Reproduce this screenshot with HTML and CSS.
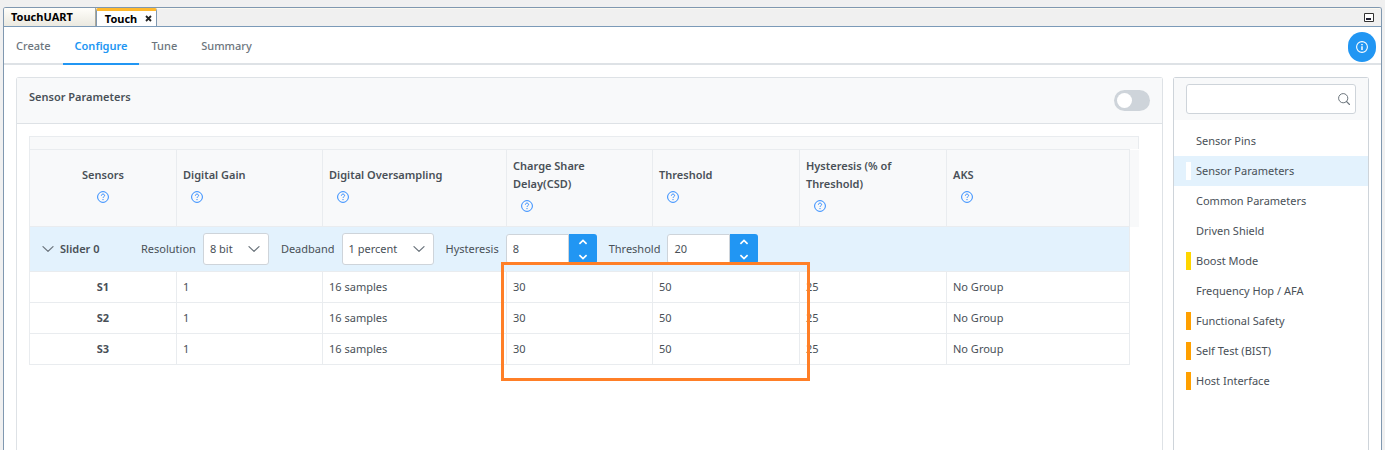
FILE: index.html
```html
<!DOCTYPE html>
<html lang="en">
<head>
<meta charset="utf-8">
<title>Touch</title>
<link rel="stylesheet" href="styles.css">
</head>
<body>
<svg class="sprite" aria-hidden="true">
  <symbol id="help" viewBox="0 0 12 12"><circle cx="6" cy="6" r="5.4" fill="none" stroke="currentColor" stroke-width="1"/><path d="M4.4 4.7C4.4 3.7 5.1 3.1 6 3.1s1.6.6 1.6 1.5c0 1.1-1.6 1.2-1.6 2.3" fill="none" stroke="currentColor" stroke-width="1"/><circle cx="6" cy="8.6" r=".7" fill="currentColor"/></symbol>
  <symbol id="down" viewBox="0 0 12 12"><path d="M1 3.6l5 4.8 5-4.8" fill="none" stroke="currentColor" stroke-width="1.3" stroke-linecap="round" stroke-linejoin="round"/></symbol>
  <symbol id="spin-up" viewBox="0 0 10 6"><path d="M1.4 4.8L5 1.4l3.6 3.4" fill="none" stroke="currentColor" stroke-width="1.7"/></symbol>
  <symbol id="spin-down" viewBox="0 0 10 6"><path d="M1.4 1.2L5 4.6l3.6-3.4" fill="none" stroke="currentColor" stroke-width="1.7"/></symbol>
</svg>
<div class="window">
  <header class="editor-tabs">
    <button class="editor-tab" type="button">TouchUART</button>
    <button class="editor-tab editor-tab-active" type="button">Touch
      <svg class="close" viewBox="0 0 7 7"><path d="M1 1l5 5M6 1L1 6" stroke="#222" stroke-width="1.8"/></svg>
    </button>
    <button class="minimize" type="button" aria-label="Minimize">
      <svg viewBox="0 0 10 9"><path d="M.5.5h9v8h-9z" fill="#fff" stroke="#333" stroke-width="1"/><path d="M2 5h5v2H2z" fill="#223"/></svg>
    </button>
  </header>
  <nav class="steps">
    <a class="step" href="#create">Create</a>
    <a class="step step-active" href="#configure">Configure</a>
    <a class="step" href="#tune">Tune</a>
    <a class="step" href="#summary">Summary</a>
    <button class="info" type="button" aria-label="Information">
      <svg viewBox="0 0 12 12"><circle cx="6" cy="6" r="5.4" fill="none" stroke="#fff" stroke-width="1.1"/><path d="M6 5.2V9M6 2.9v1.3" stroke="#fff" stroke-width="1.5"/></svg>
    </button>
  </nav>
  <main class="content">
    <section class="panel">
      <div class="panel-head">
        <h1 class="panel-title" id="title">Sensor Parameters</h1>
        <input class="switch" type="checkbox" role="switch" aria-labelledby="title">
      </div>
      <div class="panel-body">
        <div class="table-strip"></div>
        <table class="params">
          <colgroup><col class="c-first"><col class="c-mid"><col class="c-wide"><col class="c-mid"><col><col><col class="c-last"><col class="c-gutter"></colgroup>
          <thead>
            <tr>
              <th class="center">Sensors<svg class="help"><use href="#help"/></svg></th>
              <th>Digital Gain<svg class="help"><use href="#help"/></svg></th>
              <th>Digital Oversampling<svg class="help"><use href="#help"/></svg></th>
              <th>Charge Share Delay(CSD)<svg class="help"><use href="#help"/></svg></th>
              <th>Threshold<svg class="help"><use href="#help"/></svg></th>
              <th>Hysteresis (% of Threshold)<svg class="help"><use href="#help"/></svg></th>
              <th>AKS<svg class="help"><use href="#help"/></svg></th>
              <td class="gutter"></td>
            </tr>
          </thead>
          <tbody>
            <tr>
              <td class="group" colspan="7">
                <div class="group-row">
                  <button class="group-toggle" type="button"><svg class="chev"><use href="#down"/></svg>Slider 0</button>
                  <div class="field">
                    <label for="resolution">Resolution</label>
                    <span class="pick"><select id="resolution" class="select select-short"><option>8 bit</option></select><svg class="chev"><use href="#down"/></svg></span>
                  </div>
                  <div class="field">
                    <label for="deadband">Deadband</label>
                    <span class="pick"><select id="deadband" class="select select-long"><option>1 percent</option></select><svg class="chev"><use href="#down"/></svg></span>
                  </div>
                  <div class="field">
                    <label for="hysteresis">Hysteresis</label>
                    <span class="spinner"><input id="hysteresis" type="text" inputmode="numeric" value="8"><span class="spin-buttons"><button type="button" aria-label="Increase"><svg><use href="#spin-up"/></svg></button><button type="button" aria-label="Decrease"><svg><use href="#spin-down"/></svg></button></span></span>
                  </div>
                  <div class="field">
                    <label for="threshold">Threshold</label>
                    <span class="spinner"><input id="threshold" type="text" inputmode="numeric" value="20"><span class="spin-buttons"><button type="button" aria-label="Increase"><svg><use href="#spin-up"/></svg></button><button type="button" aria-label="Decrease"><svg><use href="#spin-down"/></svg></button></span></span>
                  </div>
                </div>
              </td>
            </tr>
            <tr><td class="name">S1</td><td>1</td><td>16 samples</td><td>30</td><td>50</td><td>25</td><td>No Group</td></tr>
            <tr><td class="name">S2</td><td>1</td><td>16 samples</td><td>30</td><td>50</td><td>25</td><td>No Group</td></tr>
            <tr><td class="name">S3</td><td>1</td><td>16 samples</td><td>30</td><td>50</td><td>25</td><td>No Group</td></tr>
          </tbody>
        </table>
        <div class="highlight"></div>
      </div>
    </section>
    <aside class="side">
      <div class="search">
        <input type="search" aria-label="Search">
        <svg viewBox="0 0 12 12"><circle cx="5.2" cy="5.2" r="4.6" fill="none" stroke="currentColor" stroke-width="1"/><path d="M8.5 8.5l3 3" stroke="currentColor" stroke-width="1.1" stroke-linecap="round"/></svg>
      </div>
      <nav class="side-list">
        <a href="#p1">Sensor Pins</a>
        <a class="current" href="#p2">Sensor Parameters</a>
        <a href="#p3">Common Parameters</a>
        <a href="#p4">Driven Shield</a>
        <a class="yellow" href="#p5">Boost Mode</a>
        <a href="#p6">Frequency Hop / AFA</a>
        <a class="orange" href="#p7">Functional Safety</a>
        <a class="orange" href="#p8">Self Test (BIST)</a>
        <a class="orange" href="#p9">Host Interface</a>
      </nav>
    </aside>
  </main>
</div>
</body>
</html>
```
FILE: styles.css
```css
* { box-sizing: border-box; }
body {
  margin: 0;
  height: 100vh;
  overflow: hidden;
  background: #f0f0f0;
  color: #495057;
  font: 11px/18px "Noto Sans", "Open Sans", sans-serif;
}
button, input, select { font: inherit; color: inherit; margin: 0; }
button { padding: 0; border: 0; background: none; }
a { color: inherit; text-decoration: none; }
svg { display: block; }
.sprite { position: absolute; width: 0; height: 0; }

.window {
  height: 100vh;
  margin: 7px 3px 0;
  border: 1px solid #8098b0;
  border-bottom: 0;
  border-radius: 3px 3px 0 0;
  background: #fff;
  display: flex;
  flex-direction: column;
  overflow: hidden;
}
.editor-tabs {
  display: flex;
  height: 19px;
  flex: none;
  background: #f0f0f0;
  border-top: 1px solid #fbf9f0;
  border-bottom: 1px solid #7b9ab8;
}
.editor-tab {
  padding: 0 22px 0 7px;
  margin-top: -1px;
  border-right: 1px solid #aca899;
  background: linear-gradient(#fffefa, #ebe9e0);
  color: #000;
  font-weight: 700;
  line-height: 18px;
}
.editor-tab-active {
  display: flex;
  align-items: center;
  gap: 8px;
  padding: 0 4px 0 8px;
  border: 1px solid #8098b0;
  border-top: 3px solid #ffb92e;
  border-bottom: 0;
  border-radius: 2px 2px 0 0;
  background: #fff;
  line-height: 14px;
}
.close { width: 7px; height: 7px; }
.minimize { align-self: flex-start; margin: 4px 7px 0 auto; }
.minimize svg { width: 10px; height: 9px; }

.steps {
  display: flex;
  flex: none;
  height: 38px;
  border-bottom: 2px solid #dee2e6;
  color: #6c757d;
  font-weight: 500;
}
.step { padding: 10px 12px 0; height: 38px; }
.step-active { color: #2196f3; font-weight: 600; border-bottom: 2px solid #2196f3; }
.info {
  display: grid;
  place-items: center;
  width: 28px;
  height: 30px;
  margin: 5px 5px 0 auto;
  border-radius: 14px;
  background: #2196f3;
}
.info svg { width: 12px; height: 12px; }

.content { flex: 1; display: flex; gap: 10px; padding: 12px 12px 0; }
.panel { flex: 1; border: 1px solid #dee2e6; border-bottom: 0; border-radius: 3px 3px 0 0; }
.panel-head {
  display: flex;
  justify-content: space-between;
  height: 46px;
  padding: 10px 12px 0;
  background: #f8f9fa;
  border-bottom: 1px solid #dee2e6;
}
.panel-title { margin: 0; font-size: 11px; line-height: 18px; font-weight: 600; }
.switch {
  appearance: none;
  width: 36px;
  height: 21px;
  margin-top: 2px;
  padding: 3px;
  border-radius: 11px;
  background: #ced4da;
}
.switch::before { content: ""; display: block; width: 15px; height: 15px; border-radius: 50%; background: #fff; }
.panel-body { position: relative; padding: 12px 23px 0 12px; }
.table-strip { height: 13px; background: #f8f9fa; border: 1px solid #e9ecef; border-bottom: 0; }
.params { width: 100%; table-layout: fixed; border-collapse: collapse; }
.c-first { width: 147px; }
.c-mid { width: 146px; }
.c-wide { width: 184px; }
.c-last { width: 183px; }
.c-gutter { width: 9px; }
.params th, .params td { border: 1px solid #e9ecef; padding: 6px; text-align: left; }
.params th { height: 77px; padding-bottom: 14px; background: #f8f9fa; font-weight: 600; }
.params th:not(.center) { padding-right: 20px; }
.params th.center, .params td.name { text-align: center; }
.params td.name { font-weight: 700; }
.params td.gutter { padding: 0; border: 0; background: #f8f9fa; }
.params td.group { height: 45px; padding: 0 12px; background: #e3f2fd; border-bottom-color: #e9ecef; }
.help { width: 12px; height: 12px; margin: 7px 8px 0; color: #2f8bff; }
.center .help { margin: 7px auto 0; }
.group-row { display: flex; align-items: center; gap: 12px; }
.group-toggle { display: flex; align-items: center; gap: 6px; width: 87px; font-weight: 600; }
.chev { width: 12px; height: 12px; color: #6c757d; }
.field { display: flex; align-items: center; gap: 7px; }
.pick { position: relative; }
.select {
  appearance: none;
  display: block;
  height: 32px;
  padding: 0 6px;
  border: 1px solid #ced4da;
  border-radius: 3px;
  background: #fff;
}
.select-short { width: 66px; }
.select-long { width: 92px; }
.pick .chev { position: absolute; right: 9px; top: 10px; pointer-events: none; }
.spinner { display: flex; height: 30px; }
.spinner input { width: 63px; padding: 0 6px; border: 1px solid #ced4da; border-radius: 3px 0 0 3px; background: #fff; }
.spin-buttons { display: flex; flex-direction: column; width: 28px; background: #2196f3; color: #fff; border-radius: 0 3px 3px 0; }
.spin-buttons button { flex: 1; display: grid; place-items: center; color: inherit; }
.spin-buttons svg { width: 10px; height: 6px; }
.highlight { position: absolute; left: 484px; top: 138px; width: 309px; height: 119px; border: 3px solid #ff7f27; pointer-events: none; }

.side { width: 196px; flex: none; border: 1px solid #ced4da; border-bottom: 0; border-radius: 3px 3px 0 0; }
.search { position: relative; padding: 6px 12px; background: #f8f9fa; }
.search input { display: block; appearance: none; width: 100%; height: 30px; padding: 0 24px 0 6px; border: 1px solid #ced4da; border-radius: 3px; background: #fff; }
.search svg { position: absolute; right: 18px; top: 15px; width: 12px; height: 12px; color: #6c757d; }
.side-list { padding-top: 6px; }
.side-list a { display: flex; align-items: center; gap: 5px; height: 30px; padding-left: 12px; }
.side-list a::before { content: ""; width: 5px; height: 18px; background: #fff; }
.side-list .current { background: #e3f2fd; }
.side-list .yellow::before { background: #ffd600; }
.side-list .orange::before { background: #ffa000; }
```
